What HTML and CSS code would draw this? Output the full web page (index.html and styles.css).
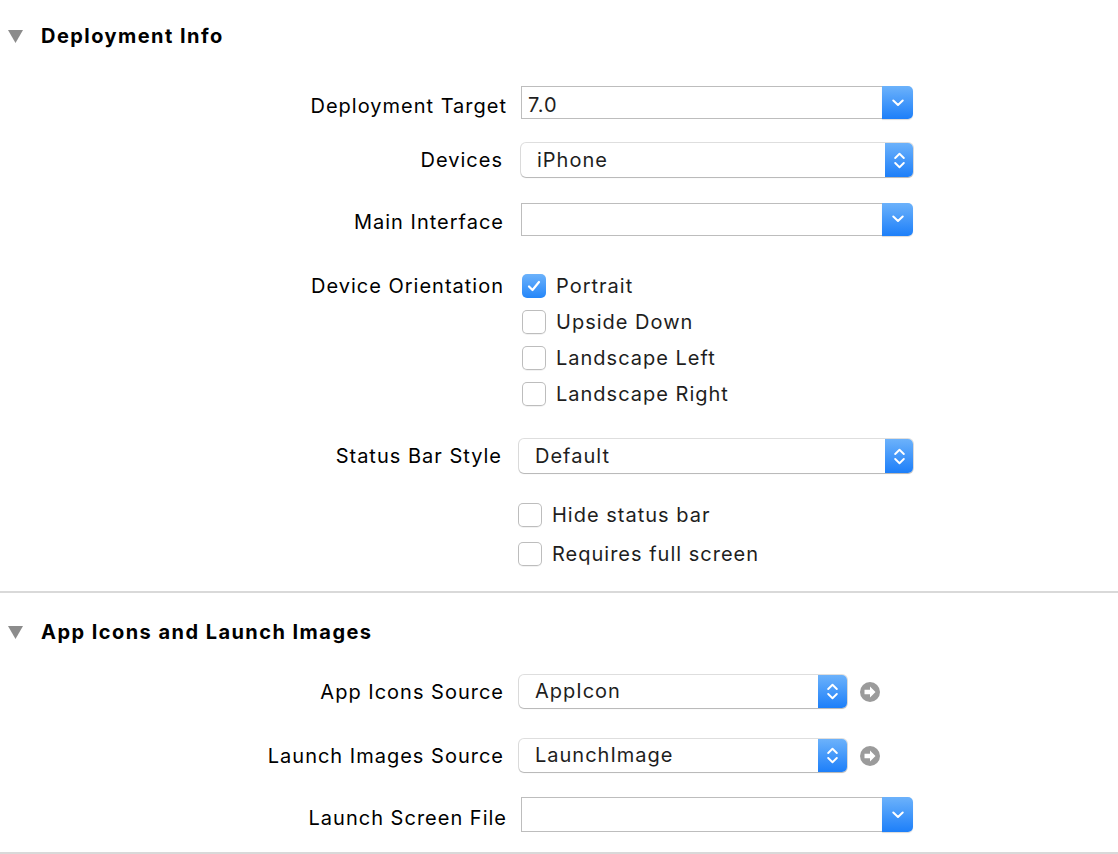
FILE: index.html
```html
<!DOCTYPE html>
<html>
<head>
<meta charset="utf-8">
<link rel="stylesheet" href="styles.css">
</head>
<body>
<div class="page">
  <section class="section first">
    <div class="sec-head">
      <svg class="tri" width="15" height="13" viewBox="0 0 15 13"><path d="M0 0 H15 L7.5 13 Z" fill="#8c8c8c"/></svg>
      <span class="sec-title">Deployment Info</span>
    </div>

    <div class="row r-target combo-row">
      <div class="label">Deployment Target</div>
      <div class="combo wide">
        <div class="combo-field">7.0</div>
        <div class="combo-btn"><svg width="12" height="8" viewBox="0 0 12 8"><path d="M1.3 1.5 L6 6 L10.7 1.5" fill="none" stroke="#fff" stroke-width="2" stroke-linecap="round" stroke-linejoin="round"/></svg></div>
      </div>
    </div>

    <div class="row r-devices">
      <div class="label">Devices</div>
      <div class="popup wide">
        <div class="popup-text">iPhone</div>
        <div class="popup-btn"><svg width="11" height="17" viewBox="0 0 11 17"><path d="M1.2 6 L5.5 1.8 L9.8 6 M1.2 11 L5.5 15.2 L9.8 11" fill="none" stroke="#fff" stroke-width="1.9" stroke-linecap="round" stroke-linejoin="round"/></svg></div>
      </div>
    </div>

    <div class="row r-main combo-row">
      <div class="label">Main Interface</div>
      <div class="combo wide">
        <div class="combo-field"></div>
        <div class="combo-btn"><svg width="12" height="8" viewBox="0 0 12 8"><path d="M1.3 1.5 L6 6 L10.7 1.5" fill="none" stroke="#fff" stroke-width="2" stroke-linecap="round" stroke-linejoin="round"/></svg></div>
      </div>
    </div>

    <div class="row r-orient">
      <div class="label">Device Orientation</div>
      <div class="checks orient">
        <label class="check"><span class="box on"><svg width="14" height="12" viewBox="0 0 14 12"><path d="M2 6.5 L5.5 10 L12 2" fill="none" stroke="#fff" stroke-width="2.2" stroke-linecap="round" stroke-linejoin="round"/></svg></span><span class="ctext">Portrait</span></label>
        <label class="check"><span class="box"></span><span class="ctext">Upside Down</span></label>
        <label class="check"><span class="box"></span><span class="ctext">Landscape Left</span></label>
        <label class="check"><span class="box"></span><span class="ctext">Landscape Right</span></label>
      </div>
    </div>

    <div class="row r-status">
      <div class="label">Status Bar Style</div>
      <div class="popup status">
        <div class="popup-text">Default</div>
        <div class="popup-btn"><svg width="11" height="17" viewBox="0 0 11 17"><path d="M1.2 6 L5.5 1.8 L9.8 6 M1.2 11 L5.5 15.2 L9.8 11" fill="none" stroke="#fff" stroke-width="1.9" stroke-linecap="round" stroke-linejoin="round"/></svg></div>
      </div>
    </div>

    <div class="row r-hide">
      <div class="label"></div>
      <div class="checks extra">
        <label class="check"><span class="box"></span><span class="ctext">Hide status bar</span></label>
        <label class="check"><span class="box"></span><span class="ctext">Requires full screen</span></label>
      </div>
    </div>
  </section>

  <section class="section second">
    <div class="sec-head head2">
      <svg class="tri" width="15" height="13" viewBox="0 0 15 13"><path d="M0 0 H15 L7.5 13 Z" fill="#8c8c8c"/></svg>
      <span class="sec-title">App Icons and Launch Images</span>
    </div>

    <div class="row r-appicons">
      <div class="label">App Icons Source</div>
      <div class="popup short">
        <div class="popup-text">AppIcon</div>
        <div class="popup-btn"><svg width="11" height="17" viewBox="0 0 11 17"><path d="M1.2 6 L5.5 1.8 L9.8 6 M1.2 11 L5.5 15.2 L9.8 11" fill="none" stroke="#fff" stroke-width="1.9" stroke-linecap="round" stroke-linejoin="round"/></svg></div>
      </div>
      <svg class="goto" width="20" height="20" viewBox="0 0 20 20"><circle cx="10" cy="10" r="10" fill="#9b9b9b"/><path d="M4.5 7.8 H10 V4.5 L15.5 10 L10 15.5 V12.2 H4.5 Z" fill="#fff"/></svg>
    </div>

    <div class="row r-launch">
      <div class="label">Launch Images Source</div>
      <div class="popup short">
        <div class="popup-text">LaunchImage</div>
        <div class="popup-btn"><svg width="11" height="17" viewBox="0 0 11 17"><path d="M1.2 6 L5.5 1.8 L9.8 6 M1.2 11 L5.5 15.2 L9.8 11" fill="none" stroke="#fff" stroke-width="1.9" stroke-linecap="round" stroke-linejoin="round"/></svg></div>
      </div>
      <svg class="goto" width="20" height="20" viewBox="0 0 20 20"><circle cx="10" cy="10" r="10" fill="#9b9b9b"/><path d="M4.5 7.8 H10 V4.5 L15.5 10 L10 15.5 V12.2 H4.5 Z" fill="#fff"/></svg>
    </div>

    <div class="row r-screen combo-row">
      <div class="label">Launch Screen File</div>
      <div class="combo wide tall">
        <div class="combo-field"></div>
        <div class="combo-btn"><svg width="12" height="8" viewBox="0 0 12 8"><path d="M1.3 1.5 L6 6 L10.7 1.5" fill="none" stroke="#fff" stroke-width="2" stroke-linecap="round" stroke-linejoin="round"/></svg></div>
      </div>
    </div>
  </section>
</div>
</body>
</html>
```

FILE: styles.css
```css
* { box-sizing: border-box; }
html, body { margin: 0; padding: 0; background: #fff; }
body {
  font-family: Inter, "Open Sans", "Liberation Sans", sans-serif;
  font-size: 20px;
  letter-spacing: 1px;
  color: #000;
  width: 1118px;
  height: 854px;
  overflow: hidden;
}
.page { width: 1118px; }

.section { border-bottom: 2px solid #d9d9d9; }
.section.first { height: 593px; }
.section.second { height: 261px; }

.sec-head {
  height: 72px;
  display: flex;
  align-items: center;
  padding-left: 8px;
}
.sec-head.head2 { height: 78px; }
.tri { flex: none; }
.sec-title {
  margin-left: 18px;
  font-weight: 700;
  font-size: 20px;
  letter-spacing: 1.45px;
  color: #000;
}

.row { display: flex; align-items: center; }
.label {
  width: 504px;
  flex: none;
  text-align: right;
  color: #000;
  white-space: nowrap;
}
.combo-row .label { padding-top: 6px; }
.r-target .label, .r-screen .label { width: 507px; }
.r-main .label { width: 504px; }
.r-devices .label { width: 503px; }
.r-status .label { width: 502px; }

.r-target { margin-top: 14px; height: 33px; }
.r-devices { margin-top: 24px; height: 34px; }
.r-main { margin-top: 25px; height: 34px; }
.r-orient { margin-top: 38px; align-items: flex-start; }
.r-orient .label { line-height: 24px; }
.r-status { margin-top: 33px; height: 34px; }
.r-hide { margin-top: 30px; }
.r-appicons { margin-top: 4px; height: 33px; }
.r-launch { margin-top: 31px; height: 33px; }
.r-screen { margin-top: 25px; height: 35px; }

/* combo box */
.combo { display: flex; height: 33px; }
.r-target .combo, .r-screen .combo { margin-left: 14px; }
.r-main .combo { margin-left: 17px; }
.combo.tall { height: 35px; }
.combo.wide { width: 392px; }
.combo-field {
  flex: 1;
  border: 1px solid #bdbdbd;
  border-right: none;
  padding-left: 6px;
  padding-top: 5px;
  line-height: 26px;
  color: #1e1e1e;
}
.combo-btn {
  width: 31px;
  flex: none;
  border-radius: 0 5px 5px 0;
  background: linear-gradient(#6cb2fb, #1d7ff9);
  display: flex;
  align-items: center;
  justify-content: center;
  box-shadow: 0 1px 1px rgba(0,0,0,0.15);
}

/* popup button */
.popup {
  display: flex;
  height: 34px;
  border-radius: 5px;
  background: #fff;
  box-shadow: 0 0 0 1px rgba(0,0,0,0.13), 0 1px 1px rgba(0,0,0,0.18);
  overflow: hidden;
}
.r-devices .popup { margin-left: 18px; width: 392px; }
.popup.status { margin-left: 17px; width: 394px; }
.r-appicons .popup.short { margin-left: 15px; }
.r-launch .popup.short { margin-left: 15px; }
.popup.short { width: 328px; height: 33px; }
.popup-text {
  flex: 1;
  padding-left: 16px;
  line-height: 34px;
  color: #1e1e1e;
}
.popup.short .popup-text { line-height: 33px; }
.popup-btn {
  width: 28px;
  flex: none;
  background: linear-gradient(#6cb2fb, #1d7ff9);
  display: flex;
  align-items: center;
  justify-content: center;
}
.popup.short .popup-btn { width: 29px; }

.goto { margin-left: 13px; flex: none; }

/* checkboxes */
.checks {
  display: flex;
  flex-direction: column;
  gap: 12px;
}
.checks.orient { margin-left: 18px; }
.checks.extra { margin-left: 14px; gap: 15px; }
.check {
  display: flex;
  align-items: center;
  height: 24px;
}
.box {
  width: 24px;
  height: 24px;
  border-radius: 5px;
  background: #fff;
  box-shadow: inset 0 0 0 1px #bdbdbd, 0 1px 0 rgba(0,0,0,0.05);
  display: flex;
  align-items: center;
  justify-content: center;
  flex: none;
}
.box.on {
  background: linear-gradient(#6cb2fb, #2486f9);
  box-shadow: none;
}
.ctext {
  margin-left: 10px;
  color: #1e1e1e;
}
```
